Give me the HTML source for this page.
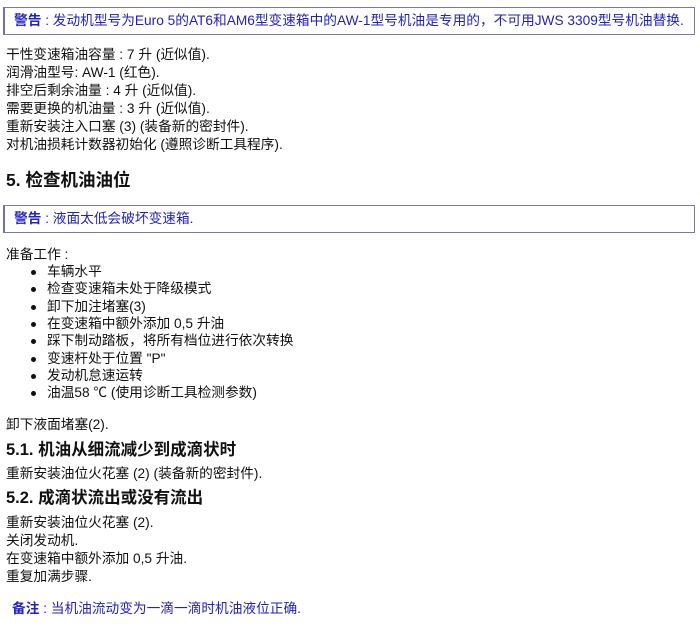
<!DOCTYPE html>
<html><head><meta charset="utf-8"><style>
body{margin:0;width:700px;height:628px;background:#fff;font-family:"Liberation Sans","Noto Sans CJK SC",sans-serif;font-size:13.7px;color:#111;position:relative;overflow:hidden}
.l{position:absolute;left:6px;line-height:18px;white-space:nowrap}
.box{position:absolute;left:3px;width:692px;height:28px;border:1px solid #7878b8;border-left:2px solid #7070b0;box-sizing:border-box;color:#2222bb;line-height:26px;padding-left:9px;white-space:nowrap}
.box b{font-weight:bold}
.h1{position:absolute;left:6px;font-size:17.5px;font-weight:bold;line-height:24px}
.h2{position:absolute;left:6px;font-size:16.5px;font-weight:bold;line-height:22px}
.li{position:absolute;left:47px;line-height:18px;white-space:nowrap}
.li:before{content:"";position:absolute;left:-16px;top:7px;width:5px;height:5px;border-radius:50%;background:#111}
</style></head><body>
<div class="box" style="top:7px"><b>警告</b> : 发动机型号为Euro 5的AT6和AM6型变速箱中的AW-1型号机油是专用的，不可用JWS 3309型号机油替换.</div>
<div class="l" style="top:46px">干性变速箱油容量 : 7 升 (近似值).</div>
<div class="l" style="top:64px">润滑油型号: AW-1 (红色).</div>
<div class="l" style="top:82px">排空后剩余油量 : 4 升 (近似值).</div>
<div class="l" style="top:100px">需要更换的机油量 : 3 升 (近似值).</div>
<div class="l" style="top:118px">重新安装注入口塞 (3) (装备新的密封件).</div>
<div class="l" style="top:136px">对机油损耗计数器初始化 (遵照诊断工具程序).</div>
<div class="h1" style="top:168px">5. 检查机油油位</div>
<div class="box" style="top:205px"><b>警告</b> : 液面太低会破坏变速箱.</div>
<div class="l" style="top:246px">准备工作 :</div>
<div class="li" style="top:263px">车辆水平</div>
<div class="li" style="top:280px">检查变速箱未处于降级模式</div>
<div class="li" style="top:298px">卸下加注堵塞(3)</div>
<div class="li" style="top:315px">在变速箱中额外添加 0,5 升油</div>
<div class="li" style="top:332px">踩下制动踏板，将所有档位进行依次转换</div>
<div class="li" style="top:350px">变速杆处于位置 "P"</div>
<div class="li" style="top:367px">发动机怠速运转</div>
<div class="li" style="top:384px">油温58 ℃ (使用诊断工具检测参数)</div>
<div class="l" style="top:416px">卸下液面堵塞(2).</div>
<div class="h2" style="top:439px">5.1. 机油从细流减少到成滴状时</div>
<div class="l" style="top:465px">重新安装油位火花塞 (2) (装备新的密封件).</div>
<div class="h2" style="top:487px">5.2. 成滴状流出或没有流出</div>
<div class="l" style="top:514px">重新安装油位火花塞 (2).</div>
<div class="l" style="top:532px">关闭发动机.</div>
<div class="l" style="top:550px">在变速箱中额外添加 0,5 升油.</div>
<div class="l" style="top:568px">重复加满步骤.</div>
<div class="l" style="top:600px;left:12px;color:#2222bb"><b>备注</b> : 当机油流动变为一滴一滴时机油液位正确.</div>
</body></html>
